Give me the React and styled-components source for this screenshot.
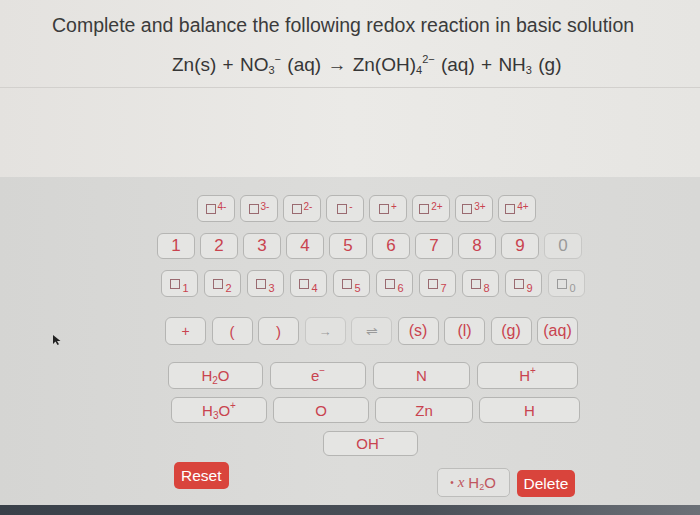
import React from "react";
import styled, { createGlobalStyle, css } from "styled-components";

const Global = createGlobalStyle`
  html, body { margin: 0; padding: 0; }
  body {
    width: 700px; height: 515px; overflow: hidden;
    background: #e9e7e4;
    font-family: "Liberation Sans", Arial, sans-serif;
  }
`;

const Page = styled.div`
  position: relative;
  width: 700px;
  height: 515px;
  display: flex;
  flex-direction: column;
  background: linear-gradient(90deg, #e4e2df 0%, #ebeae7 50%, #e6e5e2 100%);
`;

const Header = styled.div`
  height: 88px;
  display: flex;
  flex-direction: column;
  border-bottom: 1px solid #d2d0cd;
  box-sizing: border-box;
`;

const Title = styled.div`
  margin: 14px 0 0 52px;
  font-size: 19.5px;
  color: #3b3b3b;
`;

const Equation = styled.div`
  margin: 17px 0 0 172px;
  font-size: 19px;
  color: #363636;
  word-spacing: 1px;
  sub, sup { font-size: 11px; line-height: 0; }
  sub { vertical-align: -3px; }
  sup { vertical-align: 8px; }
`;

const Spacer = styled.div`
  height: 89px;
`;

const Panel = styled.div`
  flex: 1;
  background: linear-gradient(90deg, #d5d5d3 0%, #dcdcda 50%, #d8d8d6 100%);
  padding-top: 18px;
  display: flex;
  flex-direction: column;
`;

const Row = styled.div`
  display: flex;
  gap: ${(p) => p.$gap}px;
  margin-left: ${(p) => p.$left}px;
  margin-top: ${(p) => p.$top || 0}px;
  height: ${(p) => p.$h}px;
`;

const Key = styled.div`
  box-sizing: border-box;
  width: ${(p) => p.$w}px;
  height: 100%;
  display: flex;
  align-items: center;
  justify-content: center;
  border: 1.5px solid #b5b5b3;
  border-radius: 6px;
  background: #e5e5e3;
  color: #c9434f;
  font-size: ${(p) => p.$fs || 15}px;
  ${(p) =>
    p.$off &&
    css`
      color: #9a9a9a;
      background: #e1e1df;
      border-color: #c8c8c6;
    `}
`;

const Label = styled.span`
  line-height: 1;
  sub, sup { font-size: 10px; line-height: 0; }
  sub { vertical-align: -3px; }
  sup { vertical-align: 7px; }
`;

const Sq = styled.span`
  display: inline-block;
  width: 10px;
  height: 10px;
  border: 1px solid ${(p) => (p.$off ? "#9a9a9a" : "#9a6a70")};
  box-sizing: border-box;
`;

const Sup = styled.span`
  font-size: 10px;
  margin-left: 2px;
  align-self: flex-start;
  margin-top: 5px;
`;

const Sub = styled.span`
  font-size: 11px;
  margin-left: 2px;
  margin-top: 9px;
`;

const Bottom = styled.div`
  display: flex;
  margin-top: 6px;
  height: 36px;
`;

const RedBtn = styled.div`
  box-sizing: border-box;
  height: 27px;
  padding: 0 ${(p) => p.$pad}px;
  display: flex;
  align-items: center;
  background: #d9443c;
  color: #fff;
  border-radius: 5px;
  font-size: 15.5px;
  margin-left: ${(p) => p.$left}px;
  margin-top: ${(p) => p.$top}px;
`;

const WaterBtn = styled.div`
  box-sizing: border-box;
  width: 73px;
  height: 29px;
  margin-left: 208px;
  margin-top: 6px;
  display: flex;
  align-items: center;
  justify-content: center;
  gap: 4px;
  border: 1.5px solid #bdbdbb;
  border-radius: 5px;
  background: #e3e3e1;
  color: #c0565e;
  font-size: 15px;
  sub { font-size: 9px; vertical-align: -2px; line-height: 0; }
`;

const Italic = styled.span`
  font-family: "Liberation Serif", serif;
  font-style: italic;
  font-size: 15px;
`;

const Dot = styled.span`
  font-size: 10px;
`;

const Strip = styled.div`
  height: 10px;
  background: linear-gradient(90deg, #394049 0%, #4a5058 60%, #6b7077 100%);
`;

const Cursor = styled.svg`
  position: absolute;
  left: 52px;
  top: 334px;
`;

const charges = ["4-", "3-", "2-", "-", "+", "2+", "3+", "4+"];
const digits = ["1", "2", "3", "4", "5", "6", "7", "8", "9", "0"];
const symbols = [
  { t: "+", fs: 14 },
  { t: "(", fs: 15 },
  { t: ")", fs: 15 },
  { t: "→", fs: 13, off: true },
  { t: "⇌", fs: 14, off: true },
  { t: "(s)", fs: 16 },
  { t: "(l)", fs: 16 },
  { t: "(g)", fs: 16 },
  { t: "(aq)", fs: 16 },
];

export default function App() {
  return (
    <Page>
      <Global />
      <Header>
        <Title>Complete and balance the following redox reaction in basic solution</Title>
        <Equation>
          Zn(s) + NO<sub>3</sub>
          <sup>−</sup> (aq) → Zn(OH)<sub>4</sub>
          <sup>2−</sup> (aq) + NH<sub>3</sub> (g)
        </Equation>
      </Header>
      <Spacer />
      <Panel>
        <Row $left={197} $gap={5} $h={27}>
          {charges.map((c) => (
            <Key key={c} $w={38}>
              <Sq />
              <Sup>{c}</Sup>
            </Key>
          ))}
        </Row>
        <Row $left={157} $gap={5} $h={26} $top={11}>
          {digits.map((d) => (
            <Key key={d} $w={38} $fs={17} $off={d === "0"}>
              {d}
            </Key>
          ))}
        </Row>
        <Row $left={161} $gap={6} $h={27} $top={11}>
          {digits.map((d) => (
            <Key key={d} $w={37} $off={d === "0"}>
              <Sq $off={d === "0"} />
              <Sub>{d}</Sub>
            </Key>
          ))}
        </Row>
        <Row $left={165} $gap={5.5} $h={28} $top={20}>
          {symbols.map((s) => (
            <Key key={s.t} $w={41} $fs={s.fs} $off={s.off}>
              {s.t}
            </Key>
          ))}
        </Row>
        <Row $left={168} $gap={7} $h={27} $top={17}>
          <Key $w={95}>
            <Label>
              H<sub>2</sub>O
            </Label>
          </Key>
          <Key $w={96}>
            <Label>
              e<sup>−</sup>
            </Label>
          </Key>
          <Key $w={97}>N</Key>
          <Key $w={101}>
            <Label>
              H<sup>+</sup>
            </Label>
          </Key>
        </Row>
        <Row $left={171} $gap={6} $h={26} $top={8}>
          <Key $w={96}>
            <Label>
              H<sub>3</sub>O<sup>+</sup>
            </Label>
          </Key>
          <Key $w={96}>O</Key>
          <Key $w={98}>Zn</Key>
          <Key $w={101}>H</Key>
        </Row>
        <Row $left={323} $gap={0} $h={25} $top={8}>
          <Key $w={95}>
            <Label>
              OH<sup>−</sup>
            </Label>
          </Key>
        </Row>
        <Bottom>
          <RedBtn $left={174} $top={0} $pad={7}>
            Reset
          </RedBtn>
          <WaterBtn>
            <Dot>•</Dot>
            <Italic>x</Italic>
            <span>
              H<sub>2</sub>O
            </span>
          </WaterBtn>
          <RedBtn $left={7} $top={8} $pad={7}>
            Delete
          </RedBtn>
        </Bottom>
      </Panel>
      <Strip />
      <Cursor width="10" height="12" viewBox="0 0 10 12">
        <path d="M1 1 L1 10 L3.5 7.5 L5.5 11 L7 10.3 L5 7 L8.5 7 Z" fill="#222" />
      </Cursor>
    </Page>
  );
}
